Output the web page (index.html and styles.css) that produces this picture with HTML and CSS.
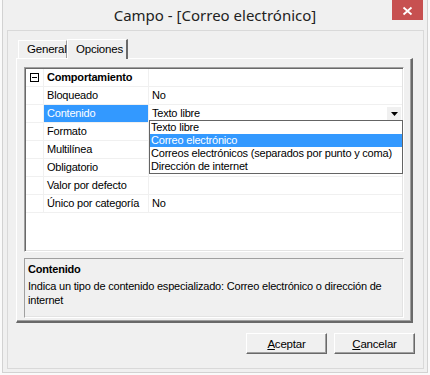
FILE: index.html
```html
<!DOCTYPE html>
<html lang="es">
<head>
  <meta charset="UTF-8" />
  <title>Campo - [Correo electrónico]</title>
  <link rel="stylesheet" href="styles.css">
</head>
<body>
  <div class="window">
    <div class="titlebar">
      <span></span>
      <span class="title">Campo - [Correo electrónico]</span>
      <button class="close">
        <svg width="31" height="20" viewBox="0 0 31 20">
          <path d="M11.5 7.5 L19.5 14.5 M19.5 7.5 L11.5 14.5" stroke="#fff" stroke-width="1.8" fill="none"/>
        </svg>
      </button>
    </div>

    <div class="client">
      <div class="tabs">
        <div class="tab">General</div>
        <div class="tab active">Opciones</div>
      </div>

      <div class="panel">
        <div class="grid">
          <div class="row category">
            <div class="margin">
              <svg width="9" height="9" viewBox="0 0 9 9">
                <rect x="0.5" y="0.5" width="8" height="8" fill="#fff" stroke="#000"/>
                <path d="M2 4.5 H7" stroke="#000"/>
              </svg>
            </div>
            <div class="label">Comportamiento</div>
            <div class="value"></div>
          </div>
          <div class="row">
            <div class="margin"></div>
            <div class="label">Bloqueado</div>
            <div class="value">No</div>
          </div>
          <div class="row">
            <div class="margin"></div>
            <div class="label selected">Contenido</div>
            <div class="value editing">
              <span>Texto libre</span>
              <span class="drop-btn">
                <svg width="7" height="4" viewBox="0 0 7 4"><path d="M0 0 H7 L3.5 4 Z" fill="#000"/></svg>
              </span>
              <div class="dropdown">
                <div class="item">Texto libre</div>
                <div class="item on">Correo electrónico</div>
                <div class="item">Correos electrónicos (separados por punto y coma)</div>
                <div class="item">Dirección de internet</div>
              </div>
            </div>
          </div>
          <div class="row">
            <div class="margin"></div>
            <div class="label">Formato</div>
            <div class="value"></div>
          </div>
          <div class="row">
            <div class="margin"></div>
            <div class="label">Multilínea</div>
            <div class="value"></div>
          </div>
          <div class="row">
            <div class="margin"></div>
            <div class="label">Obligatorio</div>
            <div class="value"></div>
          </div>
          <div class="row">
            <div class="margin"></div>
            <div class="label">Valor por defecto</div>
            <div class="value"></div>
          </div>
          <div class="row">
            <div class="margin"></div>
            <div class="label">Único por categoría</div>
            <div class="value">No</div>
          </div>
        </div>

        <div class="desc">
          <div class="desc-title">Contenido</div>
          <div class="desc-text">Indica un tipo de contenido especializado: Correo electrónico o dirección de internet</div>
        </div>
      </div>

      <div class="buttons">
        <button class="btn"><u>A</u>ceptar</button>
        <button class="btn"><u>C</u>ancelar</button>
      </div>
    </div>
  </div>
</body>
</html>
```

FILE: styles.css
```css
body {
  margin: 0;
  background-color: #fafafa;
  font-family: "Liberation Sans", Arial, sans-serif;
  font-size: 11px;
  letter-spacing: -0.2px;
  color: #000;
}

.window {
  margin: 0 2px;
  height: 372px;
  border: 1px solid #d2d2d2;
  border-top: none;
  background-color: #f0f0f0;
}

.titlebar {
  height: 30px;
  display: grid;
  grid-template-columns: 1fr auto 1fr;
  align-items: start;
}

.title {
  font-family: "Noto Sans", "Open Sans", sans-serif;
  font-size: 15px;
  letter-spacing: 0;
  color: #222;
  line-height: 30px;
}

.close {
  justify-self: end;
  margin-right: 4px;
  width: 31px;
  height: 20px;
  padding: 0;
  border: none;
  background-color: #c75050;
  display: flex;
}

.client {
  margin: 0 3px 0 4px;
  height: 337px;
  border: 1px solid #d9d9d9;
  background-color: #f0f0f0;
}

.tabs {
  display: flex;
  align-items: flex-end;
  margin-top: 8px;
  padding-left: 10px;
  height: 19px;
}

.tab {
  box-sizing: border-box;
  height: 18px;
  width: 49px;
  padding-left: 8px;
  line-height: 17px;
  border-top: 1px solid #fff;
  border-left: 1px solid #fff;
  border-right: 1px solid #a0a0a0;
  font-size: 11.5px;
}

.tab.active {
  width: 61px;
  height: 20px;
  margin-bottom: -1px;
  padding-left: 8px;
  line-height: 19px;
  background-color: #f0f0f0;
  border-right: 2px solid #696969;
  position: relative;
  z-index: 1;
}

.panel {
  box-sizing: border-box;
  margin-left: 8px;
  width: 397px;
  height: 265px;
  padding: 8px 0 0 7px;
  border-top: 1px solid #fff;
  border-left: 1px solid #fff;
  border-right: 2px solid #696969;
  border-bottom: 2px solid #696969;
  box-shadow: inset -1px -1px 0 #a0a0a0;
}

.grid {
  box-sizing: border-box;
  width: 380px;
  height: 185px;
  background-color: #fff;
  border: 1px solid;
  border-color: #a0a0a0 #fff #fff #a0a0a0;
  box-shadow: inset 1px 1px 0 #696969, inset -1px -1px 0 #e3e3e3;
  padding: 1px 1px 0 1px;
}

.row {
  display: flex;
  height: 18px;
  box-sizing: border-box;
  border-bottom: 1px solid #f0f0f0;
  line-height: 17px;
}

.margin {
  width: 17px;
  border-right: 1px solid #f0f0f0;
  display: flex;
  align-items: center;
  justify-content: flex-end;
  padding-right: 4px;
  box-sizing: border-box;
  width: 18px;
}

.label {
  box-sizing: border-box;
  width: 105px;
  padding-left: 3px;
  border-right: 1px solid #f0f0f0;
  white-space: nowrap;
  overflow: hidden;
}

.label.selected {
  background-color: #3399ff;
  color: #fff;
}

.category .label {
  font-weight: bold;
}

.value {
  flex: 1;
  padding-left: 3px;
  white-space: nowrap;
}

.value.editing {
  display: flex;
  align-items: center;
  position: relative;
}

.drop-btn {
  margin-left: auto;
  margin-right: 1px;
  width: 14px;
  height: 14px;
  display: flex;
  align-items: center;
  justify-content: center;
  background-color: #f0f0f0;
}

.dropdown {
  position: absolute;
  top: 15px;
  left: 0;
  width: 254px;
  box-sizing: border-box;
  border: 1px solid #646464;
  background-color: #fff;
  z-index: 2;
}

.dropdown .item {
  height: 13px;
  line-height: 13px;
  padding-left: 1px;
}

.dropdown .item.on {
  background-color: #3399ff;
  color: #fff;
}

.desc {
  box-sizing: border-box;
  margin-top: 6px;
  width: 380px;
  height: 60px;
  padding: 3px 3px 0 3px;
  border: 1px solid;
  border-color: #a0a0a0 #fff #fff #a0a0a0;
  box-shadow: inset -1px -1px 0 #e3e3e3;
  line-height: 14px;
}

.desc-title {
  font-weight: bold;
  margin-bottom: 3px;
}

.desc-text {
  width: 365px;
}

.buttons {
  display: flex;
  justify-content: flex-end;
  gap: 7px;
  margin-top: 10px;
  padding-right: 8px;
}

.btn {
  width: 81px;
  height: 21px;
  padding: 0;
  font-family: "Liberation Sans", Arial, sans-serif;
  font-size: 11.5px;
  letter-spacing: -0.2px;
  color: #000;
  background-color: #f0f0f0;
  border: 1px solid;
  border-color: #fff #696969 #696969 #fff;
  box-shadow: inset -1px -1px 0 #a0a0a0;
}
```
